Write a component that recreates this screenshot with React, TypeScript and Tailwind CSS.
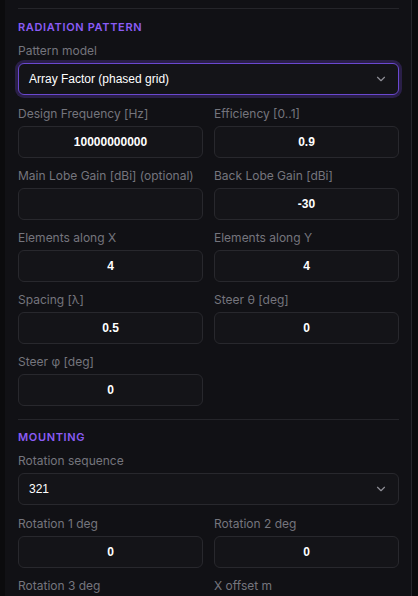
import { ChevronDown } from "lucide-react";

const labelCls = "block mb-1 whitespace-nowrap text-[12px] leading-4 text-[#75757d]";
const inputCls =
  "w-full h-8 rounded-md border border-[#28282d] bg-[#141418] text-center text-[12px] font-bold text-white outline-none";

function Field({ label, value }: { label: string; value: string }) {
  return (
    <div>
      <label className={labelCls}>{label}</label>
      <input className={inputCls} style={{ fontFamily: '"Liberation Sans", Arial, sans-serif' }} defaultValue={value} readOnly />
    </div>
  );
}

function Select({ label, value, focused }: { label: string; value: string; focused?: boolean }) {
  return (
    <div>
      <label className={labelCls}>{label}</label>
      <div
        className={
          "flex h-8 items-center justify-between rounded-md bg-[#141418] pl-[10px] pr-[10px] " +
          (focused
            ? "border border-[#6a48d0] ring-[3px] ring-[#2a1f48]"
            : "border border-[#28282d]")
        }
      >
        <span
          className="text-[12px] font-medium text-white"
          style={{ fontFamily: '"Liberation Sans", Arial, sans-serif' }}
        >
          {value}
        </span>
        <ChevronDown className="h-[14px] w-[14px] text-[#8e8e96]" strokeWidth={2} />
      </div>
    </div>
  );
}

function Heading({ children }: { children: string }) {
  return (
    <h3 className="mb-2 text-[11px] font-semibold uppercase leading-4 tracking-[0.06em] text-[#8b5cf6]">
      {children}
    </h3>
  );
}

export default function App() {
  return (
    <div
      className="h-screen overflow-hidden bg-[#0b0b0d] pl-[5px] pr-[6px]"
      style={{ fontFamily: 'Inter, "Noto Sans", sans-serif' }}
    >
      <div className="min-h-screen border-r border-[#26262b] bg-[#111115] pl-[13px] pr-3 pt-2">
        {/* Radiation pattern */}
        <section className="border-t border-[#25252a] pt-[10px] pb-[13px]">
          <Heading>Radiation Pattern</Heading>
          <div className="flex flex-col gap-[11px]">
            <Select label="Pattern model" value="Array Factor (phased grid)" focused />
            <div className="grid grid-cols-2 gap-x-[11px] gap-y-[10px]">
              <Field label="Design Frequency [Hz]" value="10000000000" />
              <Field label="Efficiency [0..1]" value="0.9" />
              <Field label="Main Lobe Gain [dBi] (optional)" value="" />
              <Field label="Back Lobe Gain [dBi]" value="-30" />
              <Field label="Elements along X" value="4" />
              <Field label="Elements along Y" value="4" />
              <Field label="Spacing [λ]" value="0.5" />
              <Field label="Steer θ [deg]" value="0" />
              <Field label="Steer φ [deg]" value="0" />
            </div>
          </div>
        </section>

        {/* Mounting */}
        <section className="border-t border-[#25252a] pt-[9px] pb-4">
          <Heading>Mounting</Heading>
          <div className="flex flex-col gap-[11px]">
            <Select label="Rotation sequence" value="321" />
            <div className="grid grid-cols-2 gap-x-[11px] gap-y-[10px]">
              <Field label="Rotation 1 deg" value="0" />
              <Field label="Rotation 2 deg" value="0" />
              <Field label="Rotation 3 deg" value="0" />
              <Field label="X offset m" value="0" />
            </div>
          </div>
        </section>
      </div>
    </div>
  );
}
